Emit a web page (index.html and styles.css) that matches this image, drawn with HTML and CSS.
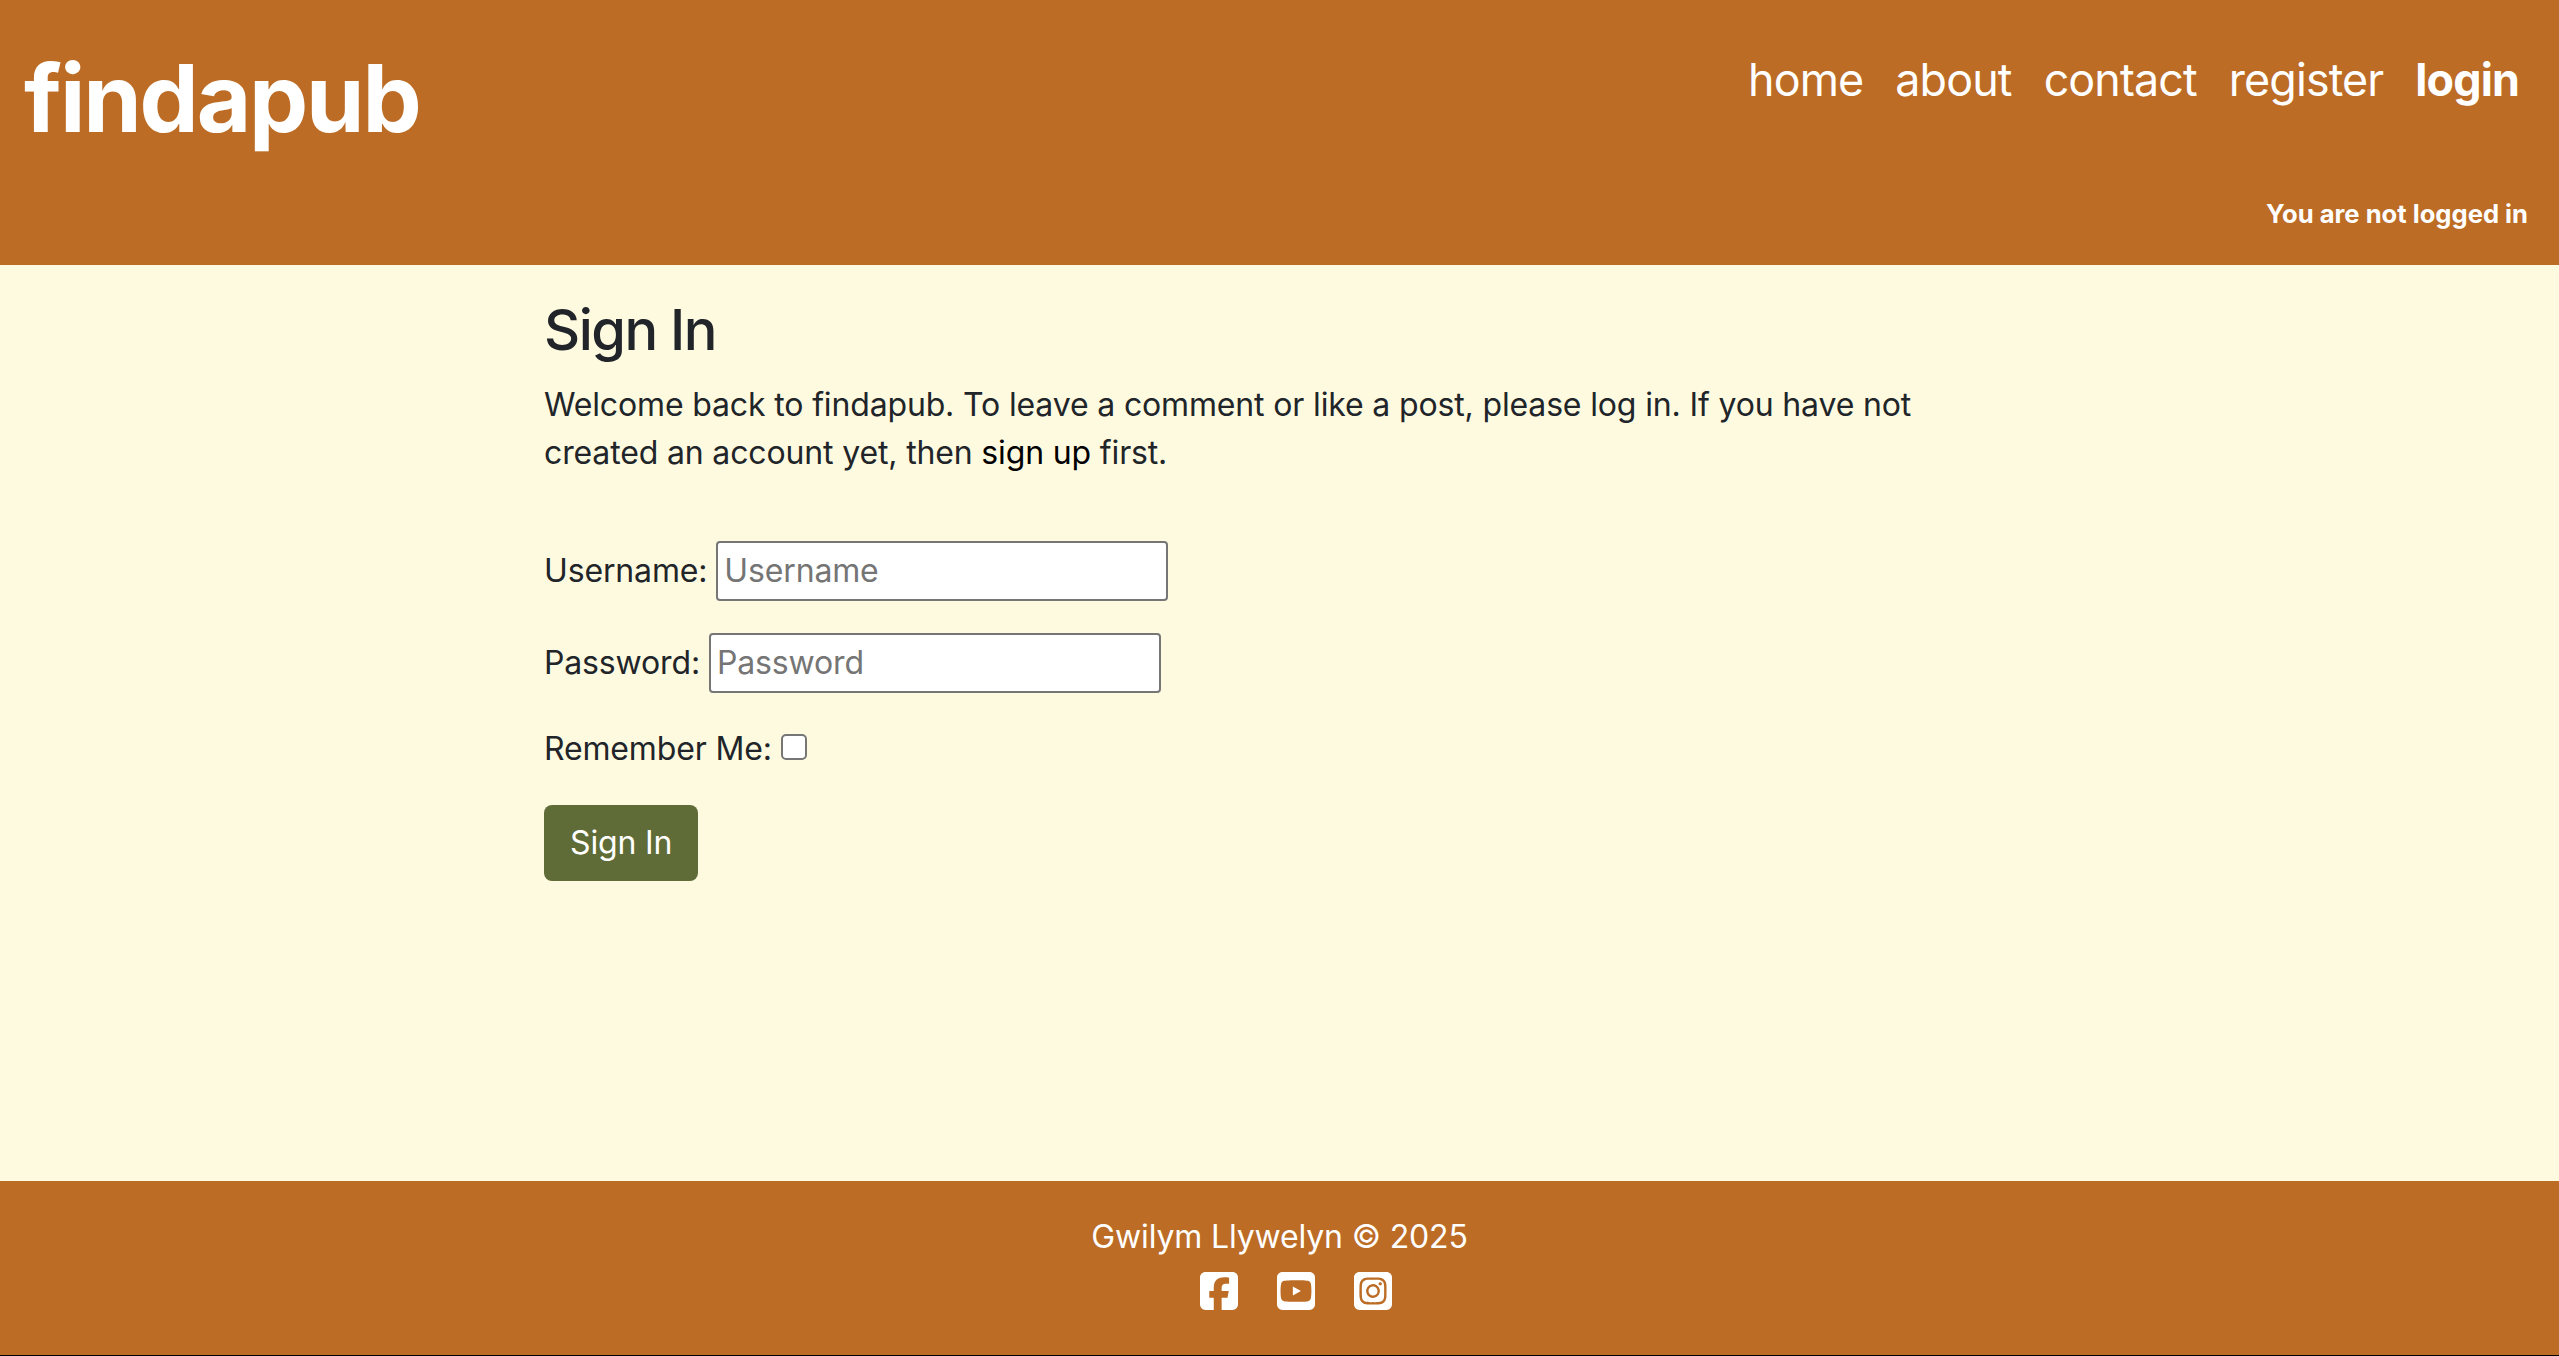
FILE: index.html
```html
<!DOCTYPE html>
<html lang="en">
<head>
<meta charset="utf-8">
<title>findapub - Sign In</title>
<link rel="stylesheet" href="styles.css">
</head>
<body>
<header class="header">
  <div class="header-top">
    <a class="brand" href="#">findapub</a>
    <nav class="nav">
      <a href="#">home</a>
      <a href="#">about</a>
      <a href="#">contact</a>
      <a href="#">register</a>
      <a class="active" href="#">login</a>
    </nav>
  </div>
  <p class="status">You are not logged in</p>
</header>
<main class="main">
  <h1 class="title">Sign In</h1>
  <p class="intro">Welcome back to findapub. To leave a comment or like a post, please log in. If you have not created an account yet, then <a href="#">sign up</a> first.</p>
  <form class="form">
    <p class="row"><label for="user">Username:</label><input class="field" id="user" type="text" placeholder="Username"></p>
    <p class="row"><label for="pass">Password:</label><input class="field" id="pass" type="password" placeholder="Password"></p>
    <p class="row row-check"><label for="remember">Remember Me:</label><input class="check" id="remember" type="checkbox"></p>
    <button class="submit" type="button">Sign In</button>
  </form>
</main>
<footer class="footer">
  <p class="copyright">Gwilym Llywelyn © 2025</p>
  <div class="social">
    <a href="#" aria-label="Facebook"><svg viewBox="0 32 448 448"><path d="M64 32C28.700 32 0 60.700 0 96V416c0 35.300 28.700 64 64 64h98.200V334.200H109.400V256h52.800V222.300c0-87.100 39.400-127.500 125-127.500c16.200 0 44.200 3.200 55.700 6.400V172c-6-.6-16.500-1-29.600-1c-42 0-58.200 15.900-58.200 57.200V256h83.600l-14.400 78.200H255V480H384c35.300 0 64-28.700 64-64V96c0-35.300-28.700-64-64-64H64z"/></svg></a>
    <a href="#" aria-label="YouTube"><svg viewBox="0 32 448 448"><path d="M282 256.200l-95.200-54.100V310.300L282 256.200zM384 32H64C28.700 32 0 60.700 0 96V416c0 35.300 28.700 64 64 64H384c35.300 0 64-28.700 64-64V96c0-35.300-28.700-64-64-64zm14.400 136.100c7.600 28.600 7.600 88.200 7.600 88.200s0 59.600-7.600 88.100c-4.200 15.800-16.500 27.700-32.200 31.900C337.900 384 224 384 224 384s-113.900 0-142.200-7.600c-15.700-4.200-28-16.100-32.200-31.900C42 315.900 42 256.300 42 256.300s0-59.700 7.600-88.200c4.200-15.800 16.500-28.200 32.200-32.400C110.100 128 224 128 224 128s113.900 0 142.200 7.700c15.700 4.200 28 16.600 32.200 32.400z"/></svg></a>
    <a href="#" aria-label="Instagram"><svg viewBox="0 32 448 448"><path d="M194.400 211.700a53.300 53.300 0 1 0 59.300 88.700 53.300 53.300 0 1 0-59.300-88.700zm142.300-68.400c-5.200-5.200-11.500-9.300-18.400-12c-18.100-7.100-57.600-6.800-83.100-6.500c-4.100 0-7.900 .1-11.200 .1c-3.300 0-7.200 0-11.400-.1c-25.500-.3-64.800-.7-82.900 6.500c-6.900 2.700-13.100 6.800-18.400 12s-9.300 11.500-12 18.400c-7.100 18.100-6.700 57.700-6.500 83.200c0 4.100 .1 7.900 .1 11.100s0 7-.1 11.100c-.2 25.500-.6 65.100 6.500 83.200c2.700 6.900 6.800 13.100 12 18.400s11.500 9.300 18.400 12c18.100 7.100 57.600 6.800 83.100 6.500c4.100 0 7.900-.1 11.200-.1c3.300 0 7.200 0 11.400 .1c25.500 .3 64.800 .7 82.900-6.500c6.900-2.700 13.100-6.800 18.400-12s9.300-11.500 12-18.400c7.200-18 6.800-57.400 6.500-83c0-4.200-.1-8.100-.1-11.400s0-7.100 .1-11.400c.3-25.500 .7-64.900-6.500-83c-2.700-6.900-6.800-13.100-12-18.400zm-67.100 44.500A82 82 0 1 1 178.400 324.200a82 82 0 1 1 91.100-136.400zm29.200-1.300c-3.100-2.100-5.600-5.100-7.100-8.600s-1.800-7.300-1.100-11.100s2.600-7.100 5.200-9.800s6.100-4.500 9.800-5.200s7.600-.4 11.100 1.100s6.500 3.900 8.600 7s3.200 6.800 3.200 10.600c0 2.500-.5 5-1.400 7.300s-2.400 4.400-4.100 6.200s-3.900 3.200-6.200 4.200s-4.800 1.500-7.300 1.500c-3.800 0-7.500-1.100-10.600-3.200zM448 96c0-35.300-28.700-64-64-64H64C28.700 32 0 60.700 0 96V416c0 35.300 28.700 64 64 64H384c35.300 0 64-28.700 64-64V96zM357 389c-18.700 18.700-41.400 24.600-67 25.900c-26.400 1.500-105.600 1.500-132 0c-25.600-1.300-48.300-7.200-67-25.900s-24.600-41.400-25.800-67c-1.500-26.400-1.500-105.600 0-132c1.300-25.600 7.100-48.300 25.800-67s41.500-24.600 67-25.800c26.400-1.500 105.600-1.500 132 0c25.600 1.300 48.300 7.100 67 25.800s24.600 41.400 25.800 67c1.500 26.300 1.500 105.400 0 131.900c-1.300 25.600-7.100 48.300-25.800 67z"/></svg></a>
  </div>
</footer>
</body>
</html>
```
FILE: styles.css
```css
* { box-sizing: border-box; }

body {
  margin: 0;
  height: 1356px;
  display: flex;
  flex-direction: column;
  overflow: hidden;
  font: 400 32px/48px Inter, "Liberation Sans", sans-serif;
  letter-spacing: -0.15px;
  color: #212529;
  background: #fefae0;
}

p, h1 { margin: 0; }
a { color: inherit; text-decoration: none; }

.header {
  height: 265px;
  padding: 25px 31px 0 24px;
  background: #bc6c25;
  color: #fff;
}

.header-top {
  display: flex;
  justify-content: space-between;
  align-items: flex-start;
  height: 165px;
}

.brand {
  font-size: 94px;
  font-weight: 700;
  line-height: 147px;
  letter-spacing: -2.2px;
}

.nav {
  display: flex;
  gap: 32px;
  padding: 21px 9px 0 0;
  font-size: 44.8px;
  line-height: 68px;
  letter-spacing: -0.86px;
}

.active { font-weight: 700; }

.status {
  font-size: 25.6px;
  font-weight: 700;
  letter-spacing: 0;
  text-align: right;
}

.main {
  flex: 1;
  width: 1471px;
  margin: 0 auto;
  padding-top: 31px;
}

.title {
  font-size: 56px;
  font-weight: 500;
  line-height: 68px;
  letter-spacing: -1.5px;
}

.intro { padding-top: 17px; }
.intro a { color: #000; }

.form { padding-top: 64px; }

.row {
  display: flex;
  align-items: center;
  height: 60px;
  gap: 9px;
  margin-bottom: 32px;
}

.field {
  width: 452px;
  height: 60px;
  padding: 1px 6px 3px;
  border: 2px solid #767676;
  border-radius: 4px;
  background: #fff;
  font: inherit;
  letter-spacing: inherit;
}

.field::placeholder { color: #757575; }

.row-check {
  height: 48px;
}

.check {
  appearance: none;
  width: 26px;
  height: 26px;
  margin: 0 0 4px;
  border: 2px solid #767676;
  border-radius: 5px;
  background: #fff;
}

.submit {
  display: block;
  height: 76px;
  padding: 0 26px;
  border: 0;
  border-radius: 8px;
  background: #606c38;
  color: #fff;
  font: inherit;
  letter-spacing: inherit;
}

.footer {
  height: 175px;
  padding-top: 32px;
  background: #bc6c25;
  border-bottom: 1px solid #000;
  color: #fff;
  text-align: center;
}

.social {
  display: flex;
  justify-content: center;
  gap: 39px;
  padding: 11px 0 0 33px;
}

.social svg {
  display: block;
  width: 38px;
  height: 38px;
  fill: #fff;
}
```
